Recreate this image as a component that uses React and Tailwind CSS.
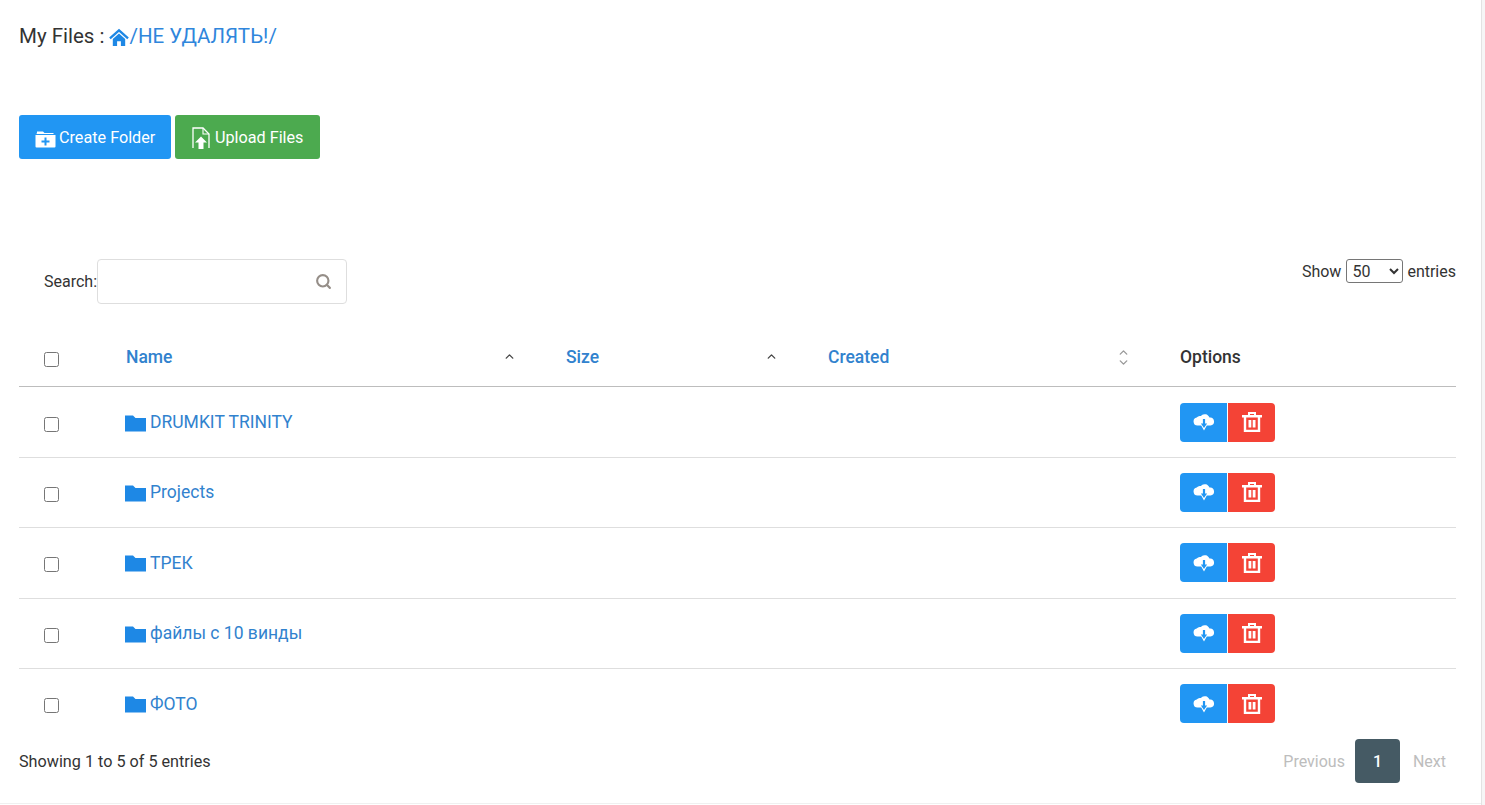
import { Search, ChevronUp, ChevronDown } from "lucide-react";

const rows = ["DRUMKIT TRINITY", "Projects", "ТРЕК", "файлы с 10 винды", "ФОТО"];

function HomeIcon() {
  return (
    <svg width="20" height="19" viewBox="0 0 21 19" className="translate-y-[1px]">
      <path d="M1 10.500L10.500 2 20 10.500" fill="none" stroke="#1e88e5" strokeWidth="2.400" />
      <path d="M4 11l6.500-5.800L17 11v7.500h-4.500v-5h-4v5H4z" fill="#1e88e5" />
    </svg>
  );
}

function FolderPlusIcon() {
  return (
    <svg width="21" height="18" viewBox="0 0 21 18" className="mr-[3px] translate-y-[1px]">
      <path d="M2 2.500V1.500h6l1.500 1.500H18.500v1H1.500z" fill="#fff" />
      <path d="M0.500 5h20v11.500a1 1 0 0 1-1 1h-18a1 1 0 0 1-1-1z" fill="#fff" />
      <path d="M9.500 7.500h2v3h3v2h-3v3h-2v-3h-3v-2h3z" fill="#2196f3" />
    </svg>
  );
}

function UploadIcon() {
  return (
    <svg width="18" height="22" viewBox="0 0 18 22" className="mr-[5px]">
      <path d="M1 21V1h10l6 6v14" fill="none" stroke="#fff" strokeWidth="1.300" />
      <path d="M11 1v6h6" fill="none" stroke="#fff" strokeWidth="1.100" />
      <path d="M9 9.500l6 6h-3.500V22h-5v-6.500H3z" fill="#fff" />
    </svg>
  );
}

function FolderIcon() {
  return (
    <svg width="21" height="17" viewBox="0 0 21 17" className="mr-[4px] translate-y-[1px]">
      <path d="M0 0.500h8l2.500 2.500H21v13.500H0z" fill="#1e88e5" />
    </svg>
  );
}

function CloudIcon() {
  return (
    <svg width="22" height="18" viewBox="0 0 22 18">
      <path d="M4.500 12.500a4 4 0 0 1-.8-7.900 4 4 0 0 1 4.300-1.500A5 5 0 0 1 16.500 4.500 4 4 0 0 1 17.500 12.500h-3.700L11 17.500 8.200 12.500z" fill="#fff" />
      <path d="M9.900 6h2.200v4.500h2L11 15l-3.100-4.500h2z" fill="#2196f3" />
    </svg>
  );
}

function TrashIcon() {
  return (
    <svg width="20" height="20" viewBox="0 0 20 20">
      <path d="M7 3V1h6v2" fill="none" stroke="#fff" strokeWidth="2" />
      <rect x="0" y="3" width="20" height="2.500" fill="#fff" />
      <path d="M3 5v14h14V5" fill="none" stroke="#fff" strokeWidth="2.400" />
      <rect x="6.500" y="8" width="2.800" height="7.500" fill="#fff" />
      <rect x="10.700" y="8" width="2.800" height="7.500" fill="#fff" />
    </svg>
  );
}

function SortHead({ label, active, width }) {
  return (
    <th className={`${width} pl-[18px] pr-[32px] text-left font-medium`}>
      <div className="flex items-center justify-between">
        <span className="text-[#3182ce]">{label}</span>
        {active ? (
          <ChevronUp size={13} strokeWidth={2.500} className="text-[#444]" />
        ) : (
          <span className="flex flex-col text-[#999] translate-y-[1px]">
            <ChevronUp size={13} strokeWidth={2.500} className="-mb-[3px]" />
            <ChevronDown size={13} strokeWidth={2.500} />
          </span>
        )}
      </div>
    </th>
  );
}

function FileRow({ name, last }) {
  return (
    <tr className={last ? "" : "border-b border-[#dedede]"}>
      <td className="pl-[25px] h-[70.400px]">
        <input type="checkbox" className="block w-[15px] h-[15px] translate-y-[2px]" />
      </td>
      <td className="px-[18px]">
        <a className="flex items-center text-[#3182ce] -translate-x-[1px]">
          <FolderIcon />
          {name}
        </a>
      </td>
      <td />
      <td />
      <td className="px-[18px]">
        <div className="flex">
          <button className="flex items-center justify-center w-[48px] h-[39px] bg-[#2196f3] rounded-l-[4px] border-r border-white">
            <CloudIcon />
          </button>
          <button className="flex items-center justify-center w-[47px] h-[39px] bg-[#f44336] rounded-r-[4px]">
            <TrashIcon />
          </button>
        </div>
      </td>
    </tr>
  );
}

export default function App() {
  return (
    <div className="flex w-[1485px] h-[805px] bg-white font-['Roboto',sans-serif] text-[#333]">
      <div className="w-[1481px] h-[804px] border-b border-[#f0f0f0] pt-[24px] pl-[19px] pr-[25px]">
        <div className="flex items-center h-[24px] text-[20.500px] leading-none">
          <span className="mr-[5px]">My Files :</span>
          <a className="flex items-center text-[#2f86dc]">
            <HomeIcon />
            /НЕ УДАЛЯТЬ!/
          </a>
        </div>

        <div className="flex gap-[4px] mt-[67px] text-[16.200px] text-white">
          <button className="flex items-center h-[44px] w-[152px] pl-[16px] pt-[2px] bg-[#2196f3] rounded-[3px]">
            <FolderPlusIcon />
            Create Folder
          </button>
          <button className="flex items-center h-[44px] w-[145px] pl-[17px] pt-[2px] bg-[#4caa4f] rounded-[3px]">
            <UploadIcon />
            Upload Files
          </button>
        </div>

        <div className="flex justify-between mt-[100px] h-[45px] text-[16px]">
          <label className="flex items-center pl-[25px] h-[45px]">
            <span>Search:</span>
            <div className="flex items-center justify-end w-[250px] h-[45px] pr-[14px] border border-[#dedede] rounded-[4px]">
              <Search size={17} strokeWidth={3} className="text-[#958e88]" />
            </div>
          </label>
          <div className="flex items-center gap-[5px] h-[24px]">
            <span className="translate-y-[1px]">Show</span>
            <select defaultValue="50" className="w-[57px] h-[24px] pl-[1px] border border-[#767676] rounded-[3px] bg-white text-[16px]">
              <option>50</option>
            </select>
            <span className="-ml-[1px] translate-y-[1px]">entries</span>
          </div>
        </div>

        <table className="w-full mt-[23px] table-fixed border-collapse text-[17.500px]">
          <thead>
            <tr className="border-b border-[#bdbdbd] h-[59.900px]">
              <th className="w-[89px] pl-[25px]">
                <input type="checkbox" className="block w-[15px] h-[15px] translate-y-[3px]" />
              </th>
              <SortHead label="Name" active width="w-[440px]" />
              <SortHead label="Size" active width="w-[262px]" />
              <SortHead label="Created" width="w-[352px]" />
              <th className="px-[18px] text-left font-medium">Options</th>
            </tr>
          </thead>
          <tbody>
            {rows.map((r, i) => (
              <FileRow key={r} name={r} last={i === rows.length - 1} />
            ))}
          </tbody>
        </table>

        <div className="flex justify-between items-center h-[44px] text-[16.200px]">
          <span className="translate-y-[1px]">Showing 1 to 5 of 5 entries</span>
          <div className="flex items-center text-[16px] text-[#bdbdbd]">
            <span className="mr-[10px] translate-y-[1px]">Previous</span>
            <span className="flex items-center justify-center w-[45px] h-[44px] pt-[2px] bg-[#455a64] rounded-[4px] text-white font-medium">1</span>
            <span className="ml-[13px] mr-[10px] translate-y-[1px]">Next</span>
          </div>
        </div>
      </div>
      <div className="w-[4px] h-full bg-[#f6f6f6] border-l border-[#e3e3e3]" />
    </div>
  );
}
